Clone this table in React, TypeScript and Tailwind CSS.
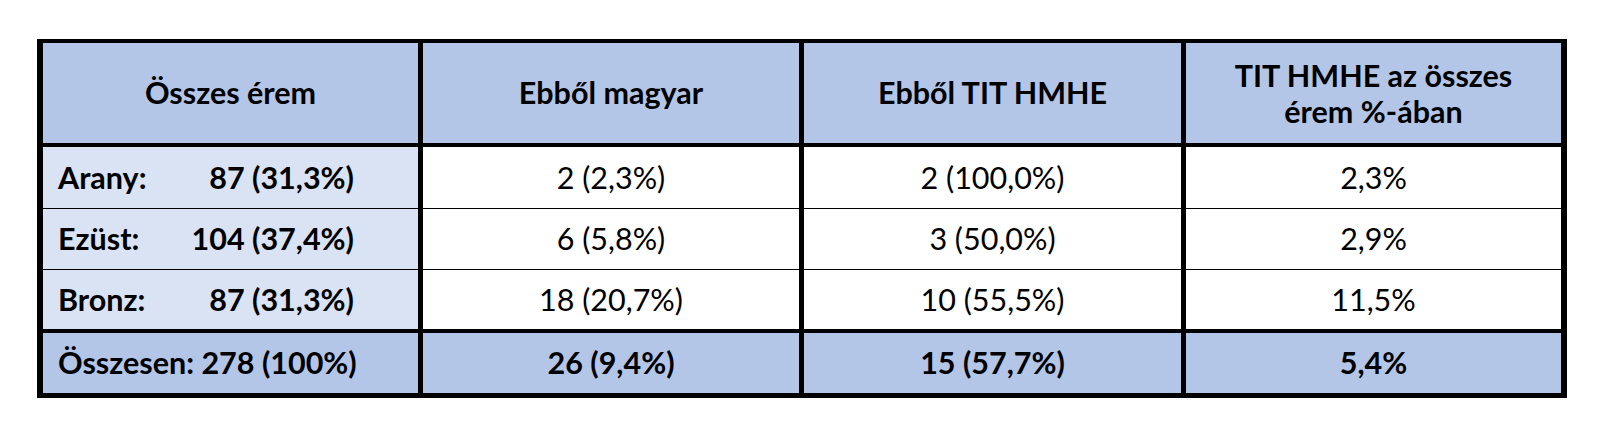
const rows = [
  { label: 'Arany:', total: '87 (31,3%)', hu: '2 (2,3%)', tit: '2 (100,0%)', pct: '2,3%' },
  { label: 'Ezüst:', total: '104 (37,4%)', hu: '6 (5,8%)', tit: '3 (50,0%)', pct: '2,9%' },
  { label: 'Bronz:', total: '87 (31,3%)', hu: '18 (20,7%)', tit: '10 (55,5%)', pct: '11,5%' },
];

const cols = 'grid grid-cols-[380px_381px_382px_375px]';

export default function App() {
  return (
    <div className="w-[1600px] h-[436px] bg-white pt-[39px] pl-[37px] font-['Lato',sans-serif] text-[30.5px] text-black whitespace-nowrap">
      <div className="w-[1530px] border-black border-x-[6px] border-t-4 border-b-[5px]">
        {/* Header */}
        <div className={`${cols} h-[104px] bg-[#b4c6e7] border-b-4 border-black font-bold`}>
          <div className="flex items-center justify-center border-r-[5px] border-black">Összes érem</div>
          <div className="flex items-center justify-center border-r-[5px] border-black">Ebből magyar</div>
          <div className="flex items-center justify-center border-r-[5px] border-black">Ebből TIT HMHE</div>
          <div className="flex items-center justify-center text-center leading-[36px]">
            TIT HMHE az összes
            <br />
            érem %-ában
          </div>
        </div>

        {/* Body */}
        {rows.map((r, i) => (
          <div
            key={r.label}
            className={`${cols} ${i === 2 ? 'h-[63px] border-b-4' : i === 0 ? 'h-[62px] border-b' : 'h-[61px] border-b'} border-black`}
          >
            <div className="flex items-center bg-[#dae3f3] border-r-[5px] border-black pl-[15px]">
              <div className="flex w-[296px] justify-between font-bold">
                <span>{r.label}</span>
                <span>{r.total}</span>
              </div>
            </div>
            <div className="flex items-center justify-center border-r-[5px] border-black">{r.hu}</div>
            <div className="flex items-center justify-center border-r-[5px] border-black">{r.tit}</div>
            <div className="flex items-center justify-center">{r.pct}</div>
          </div>
        ))}

        {/* Total */}
        <div className={`${cols} h-[60px] bg-[#b4c6e7] font-bold`}>
          <div className="flex items-center border-r-[5px] border-black pl-[15px]">
            <span>Összesen: 278 (100%)</span>
          </div>
          <div className="flex items-center justify-center border-r-[5px] border-black">26 (9,4%)</div>
          <div className="flex items-center justify-center border-r-[5px] border-black">15 (57,7%)</div>
          <div className="flex items-center justify-center">5,4%</div>
        </div>
      </div>
    </div>
  );
}
